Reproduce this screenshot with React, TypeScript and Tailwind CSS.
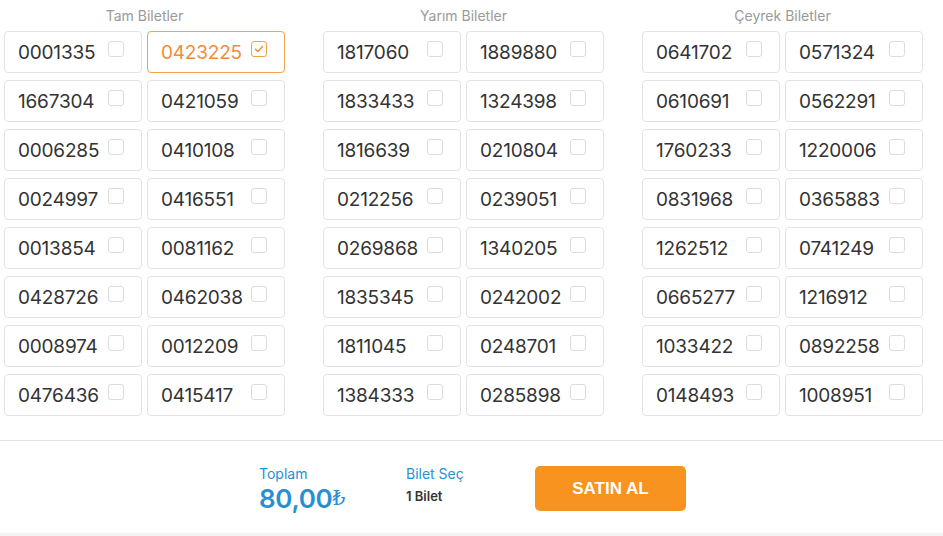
import React from "react";

const groups = [
  {
    title: "Tam Biletler",
    tickets: [
      "0001335", "0423225", "1667304", "0421059", "0006285", "0410108", "0024997", "0416551",
      "0013854", "0081162", "0428726", "0462038", "0008974", "0012209", "0476436", "0415417",
    ],
  },
  {
    title: "Yarım Biletler",
    tickets: [
      "1817060", "1889880", "1833433", "1324398", "1816639", "0210804", "0212256", "0239051",
      "0269868", "1340205", "1835345", "0242002", "1811045", "0248701", "1384333", "0285898",
    ],
  },
  {
    title: "Çeyrek Biletler",
    tickets: [
      "0641702", "0571324", "0610691", "0562291", "1760233", "1220006", "0831968", "0365883",
      "1262512", "0741249", "0665277", "1216912", "1033422", "0892258", "0148493", "1008951",
    ],
  },
];

const Ticket: React.FC<{ no: string; selected: boolean }> = ({ no, selected }) => (
  <div
    className={`flex h-[42px] items-center rounded-[4px] border pl-[13px] ${
      selected ? "border-[#f0a24e] text-[#f28c38]" : "border-[#e3e3e3] text-[#333]"
    }`}
  >
    <span className="w-[90px] shrink-0 text-[19px] leading-none tracking-[-0.2px]">{no}</span>
    <span
      className={`mb-[6px] flex h-[16px] w-[16px] items-center justify-center rounded-[3px] border bg-white ${
        selected ? "border-[#f0a24e]" : "border-[#dcdcdc]"
      }`}
    >
      {selected && (
        <svg width="10" height="10" viewBox="0 0 10 10" fill="none">
          <path d="M1.5 5.2 L4 7.5 L8.5 2.5" stroke="#f28c38" strokeWidth="1.4" strokeLinecap="round" strokeLinejoin="round" />
        </svg>
      )}
    </span>
  </div>
);

export default function App() {
  return (
    <div className="min-h-[536px] bg-white" style={{ fontFamily: "Inter, 'Noto Sans', sans-serif" }}>
      <div className="flex gap-[38px] px-[4px] pt-[6px]">
        {groups.map((g) => (
          <div key={g.title} className="w-[281px]">
            <div className="mb-[5px] h-[20px] text-center text-[14px] leading-[20px] text-[#9a9a9a]">{g.title}</div>
            <div className="grid grid-cols-2 gap-x-[5px] gap-y-[7px]">
              {g.tickets.map((t) => (
                <Ticket key={t} no={t} selected={t === "0423225"} />
              ))}
            </div>
          </div>
        ))}
      </div>
      <div className="mt-[24px] border-t border-[#e2e2e2]" />
      <div className="flex h-[92px] items-center pl-[259px] pt-[3px]">
        <div className="w-[147px]">
          <div className="text-[14px] leading-[16px] text-[#2a8fd0]">Toplam</div>
          <div className="mt-[3px] flex items-end text-[26px] font-semibold leading-[27px] tracking-[-0.3px] text-[#2a8fd0]">
            80,00
            <span className="text-[20px] font-normal" style={{ fontFamily: "'Liberation Serif', 'DejaVu Serif', serif" }}>₺</span>
          </div>
        </div>
        <div className="w-[129px] -mt-[8px]">
          <div className="text-[14px] leading-[16px] text-[#2a8fd0]">Bilet Seç</div>
          <div className="mt-[7px] text-[13px] font-semibold leading-[14px] text-[#333]">1 Bilet</div>
        </div>
        <button
          className="h-[45px] w-[151px] rounded-[5px] bg-[#f8931f] text-[17px] font-bold text-white"
          style={{ fontFamily: "'Liberation Sans', Arial, sans-serif" }}
        >
          SATIN AL
        </button>
      </div>
      <div className="h-[3px] bg-[#f3f3f3]" />
    </div>
  );
}
